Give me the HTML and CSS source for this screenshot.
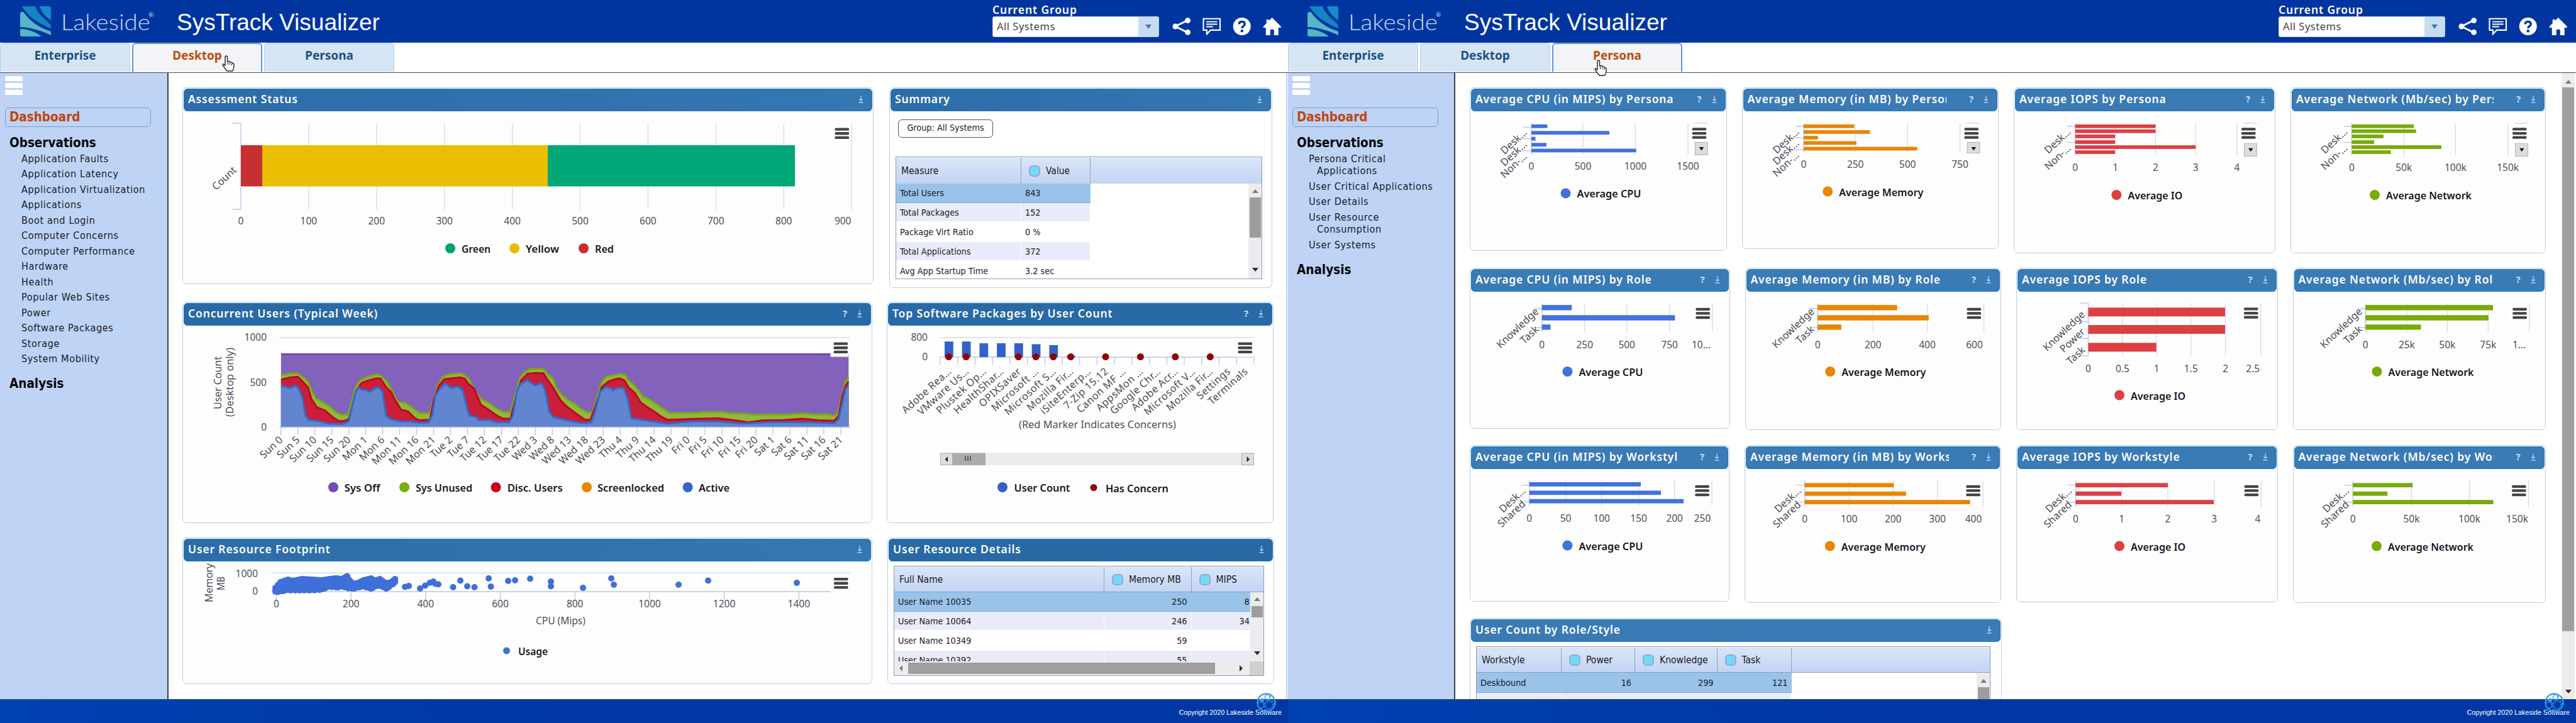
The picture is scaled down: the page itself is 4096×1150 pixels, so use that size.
FILE: index.html
```html
<!DOCTYPE html>
<html lang="en">
<head>
<meta charset="utf-8">
<title>SysTrack Visualizer</title>
<link rel="stylesheet" href="styles.css">
</head>
<body>
<svg width="0" height="0" class="defs">
  <symbol id="logo" viewBox="0 0 50 49">
    <path d="M3 0H24C27 12 40 20 49 30V35C30 28 12 16 3 0Z" fill="#1585c2"/>
    <path d="M31 0H46Q49 0 49 3V22C40 17 33 8 31 0Z" fill="#148cc9"/>
    <path d="M0 11Q2 7 6 10C16 24 30 34 49 40V46C36 40 20 34 0 33Z" fill="#54b7c8"/>
    <path d="M0 36C14 36 26 42 34 48H3Q0 48 0 45Z" fill="#54b7c8"/>
  </symbol>
  <symbol id="share" viewBox="0 0 30 28">
    <path d="M25 4L5 14L25 24" fill="none" stroke="#fff" stroke-width="3"/>
    <circle cx="25" cy="4.500" r="4.500" fill="#fff"/><circle cx="5" cy="14" r="4.500" fill="#fff"/><circle cx="25" cy="23.500" r="4.500" fill="#fff"/>
  </symbol>
  <symbol id="chat" viewBox="0 0 30 28">
    <path d="M1.500 1.500H28.500V20H13L7 26.500V20H1.500Z" fill="none" stroke="#fff" stroke-width="2.200"/>
    <path d="M6 6.500H24M6 10.500H24M6 14.500H17" stroke="#fff" stroke-width="2"/>
  </symbol>
  <symbol id="help" viewBox="0 0 28 28">
    <circle cx="14" cy="14" r="14" fill="#fff"/>
    <path d="M9.500 10.500Q9.500 6.500 14 6.500T18.500 10.500C18.500 13.500 14 13.500 14 17" fill="none" stroke="#0035a0" stroke-width="3.400"/>
    <circle cx="14" cy="21.300" r="2.200" fill="#0035a0"/>
  </symbol>
  <symbol id="home" viewBox="0 0 28 28">
    <path d="M14 0L28 14V16H24V28H17V19H11V28H4V16H0V14L5 9V3H9V5Z" fill="#fff"/>
  </symbol>
  <symbol id="save" viewBox="0 0 8 12">
    <path d="M4 0V8M1.300 5.500L4 8L6.700 5.500M.5 11H7.500" fill="none" stroke="#b4d4ef" stroke-width="1.300"/>
  </symbol>
  <symbol id="hand" viewBox="0 0 20 26">
    <path d="M5 2Q7 0 8.500 2V10L11 9.500Q13 9.500 13.500 11Q16 10.500 16.500 12.500Q19 12.500 19 15V18Q18.500 22 16.500 25H8L2 17Q0 14 2.500 14L5 16Z" fill="#fff" stroke="#222" stroke-width="1.400"/>
    <path d="M9.500 11V15M12.500 12V15M15.500 13V16" stroke="#222" stroke-width="1"/>
  </symbol>
  <symbol id="cogs" viewBox="0 0 32 32">
    <circle cx="16" cy="16" r="14.500" fill="none" stroke="#3d9be9" stroke-width="2.500"/>
    <circle cx="18" cy="7" r="4" fill="#fff" stroke="#3d9be9" stroke-width="2.500" stroke-dasharray="2.500 1.200"/>
    <circle cx="7" cy="20" r="5" fill="none" stroke="#2a86e0" stroke-width="2"/>
    <circle cx="21" cy="20" r="7" fill="none" stroke="#1f7ee0" stroke-width="4" stroke-dasharray="3 1.500"/>
    <path d="M4 12L10 8L13 13L10 16Z" fill="#3d9be9"/>
  </symbol>
</svg>

<div class="screens">
  <section class="app">
    <header class="top">
      <svg class="brand" width="220" height="60"><use href="#logo" x="0" y="10" width="50" height="49"/><text x="65" y="48" textLength="142" lengthAdjust="spacingAndGlyphs">Lakeside</text><text class="reg" x="204" y="27">®</text></svg>
      <h1>SysTrack Visualizer</h1>
      <div class="group"><label>Current Group</label><div class="select"><span>All Systems</span><i></i></div></div>
      <nav class="tools"><svg><use href="#share"/></svg><svg><use href="#chat"/></svg><svg><use href="#help"/></svg><svg><use href="#home"/></svg></nav>
    </header>
    <nav class="tabs"><a>Enterprise</a><a class="on">Desktop</a><a>Persona</a><svg class="hand hand-a"><use href="#hand"/></svg></nav>
    <div class="body">
      <aside class="side">
        <div class="burger"><i></i><i></i><i></i></div>
        <div class="current">Dashboard</div>
        <h2>Observations</h2>
        <ul>
          <li>Application Faults</li><li>Application Latency</li><li>Application Virtualization</li><li>Applications</li><li>Boot and Login</li><li>Computer Concerns</li><li>Computer Performance</li><li>Hardware</li><li>Health</li><li>Popular Web Sites</li><li>Power</li><li>Software Packages</li><li>Storage</li><li>System Mobility</li>
        </ul>
        <h2>Analysis</h2>
      </aside>
      <main class="desk">
        <article class="panel p-status"><div class="bar"><b>Assessment Status</b><svg><use href="#save"/></svg></div><svg id="status" viewBox="291 177 1097 274" width="1097" height="274"></svg></article>
        <article class="panel p-summary"><div class="bar"><b>Summary</b><svg><use href="#save"/></svg></div>
          <div class="pill">Group: All Systems</div>
          <div class="grid summary">
            <div class="thead"><span>Measure</span><span class="dot">Value</span></div>
            <div class="view">
              <div class="rows">
                <div class="row sel"><span>Total Users</span><span>843</span></div>
                <div class="row alt"><span>Total Packages</span><span>152</span></div>
                <div class="row"><span>Package Virt Ratio</span><span>0 %</span></div>
                <div class="row alt"><span>Total Applications</span><span>372</span></div>
                <div class="row"><span>Avg App Startup Time</span><span>3.2 sec</span></div>
              </div>
              <div class="vscroll"><i class="up"></i><b></b><i class="down"></i></div>
            </div>
          </div>
        </article>
        <article class="panel p-users"><div class="bar deep"><b>Concurrent Users (Typical Week)</b><em>?</em><svg><use href="#save"/></svg></div><svg id="users" viewBox="291 518 1095 313" width="1095" height="313"></svg></article>
        <article class="panel p-soft"><div class="bar deep"><b>Top Software Packages by User Count</b><em>?</em><svg><use href="#save"/></svg></div><svg id="soft" viewBox="1411 518 613 313" width="613" height="313"></svg></article>
        <article class="panel p-foot"><div class="bar"><b>User Resource Footprint</b><svg><use href="#save"/></svg></div><svg id="foot" viewBox="291 893 1095 194" width="1095" height="194"></svg></article>
        <article class="panel p-details"><div class="bar deep"><b>User Resource Details</b><svg><use href="#save"/></svg></div>
          <div class="grid details">
            <div class="thead"><span>Full Name</span><span class="dot">Memory MB</span><span class="dot">MIPS</span></div>
            <div class="view">
              <div class="rows">
                <div class="row sel"><span>User Name 10035</span><span>250</span><span>8</span></div>
                <div class="row alt"><span>User Name 10064</span><span>246</span><span>34</span></div>
                <div class="row"><span>User Name 10349</span><span>59</span><span></span></div>
                <div class="row alt"><span>User Name 10392</span><span>55</span><span></span></div>
              </div>
              <div class="vscroll"><i class="up"></i><b></b><i class="down"></i></div>
            </div>
            <div class="hscroll"><i class="left"></i><b></b><i class="right"></i><u></u></div>
          </div>
        </article>
      </main>
    </div>
    <footer><span>Copyright 2020 Lakeside Software</span><svg class="cogs"><use href="#cogs"/></svg></footer>
  </section>

  <section class="app">
    <header class="top second">
      <svg class="brand" width="220" height="60"><use href="#logo" x="0" y="10" width="50" height="49"/><text x="65" y="48" textLength="142" lengthAdjust="spacingAndGlyphs">Lakeside</text><text class="reg" x="204" y="27">®</text></svg>
      <h1>SysTrack Visualizer</h1>
      <div class="group"><label>Current Group</label><div class="select"><span>All Systems</span><i></i></div></div>
      <nav class="tools"><svg><use href="#share"/></svg><svg><use href="#chat"/></svg><svg><use href="#help"/></svg><svg><use href="#home"/></svg></nav>
    </header>
    <nav class="tabs second"><a>Enterprise</a><a>Desktop</a><a class="on">Persona</a><svg class="hand hand-b"><use href="#hand"/></svg></nav>
    <div class="body">
      <aside class="side narrow">
        <div class="burger"><i></i><i></i><i></i></div>
        <div class="current">Dashboard</div>
        <h2>Observations</h2>
        <ul>
          <li>Persona Critical<br>Applications</li><li>User Critical Applications</li><li>User Details</li><li>User Resource<br>Consumption</li><li>User Systems</li>
        </ul>
        <h2>Analysis</h2>
      </aside>
      <main class="persona">
        <div class="prow r1" id="row1"></div>
        <div class="prow r2" id="row2"></div>
        <div class="prow r3" id="row3"></div>
        <article class="panel p-roles"><div class="bar soft"><b>User Count by Role/Style</b><svg><use href="#save"/></svg></div>
          <div class="grid roles">
            <div class="thead"><span>Workstyle</span><span class="dot">Power</span><span class="dot">Knowledge</span><span class="dot">Task</span></div>
            <div class="view">
              <div class="rows">
                <div class="row sel"><span>Deskbound</span><span>16</span><span>299</span><span>121</span></div>
                <div class="row alt"><span>Non-Deskbound</span><span></span><span></span><span></span></div>
              </div>
              <div class="vscroll"><i class="up"></i><b></b></div>
            </div>
          </div>
        </article>
      </main>
      <div class="pagescroll"><i class="up"></i><b></b><i class="down"></i></div>
    </div>
    <footer><span>Copyright 2020 Lakeside Software</span><svg class="cogs"><use href="#cogs"/></svg></footer>
  </section>
</div>
<script src="app.js"></script>
</body>
</html>
```
FILE: styles.css
```css
* { box-sizing: border-box; }
body { margin: 0; background: #fff; color: #1a1a22; font-family: "DejaVu Sans Condensed", "DejaVu Sans", sans-serif; width: 4096px; height: 1150px; overflow: hidden; }
h1, h2, ul { margin: 0; padding: 0; font-weight: normal; list-style: none; }
i, em { font-style: normal; }
svg { display: block; }
.defs { position: absolute; }
.screens { display: flex; }
.app { width: 2048px; height: 1150px; display: flex; flex-direction: column; overflow: hidden; position: relative; }

.top { height: 68px; background: #0035a0; display: flex; padding-left: 32px; border-bottom: 1px solid #2a4f9f; color: #fff; }
.top.second { padding-left: 31px; }
.brand { flex: none; margin-right: 29px; }
.brand text { font: 300 36px Lato, sans-serif; fill: #c6daf2; }
.brand .reg { font: 10px Lato, sans-serif; }
.top h1 { font: 37px/1 "Liberation Sans", sans-serif; width: 1297px; padding-top: 17px; flex: none; }
.second h1 { width: 1295px; }
.group { width: 265px; padding-top: 5px; font-family: "Noto Sans", sans-serif; flex: none; }
.group label { display: block; font-weight: 600; font-size: 17.500px; letter-spacing: .9px; line-height: 21px; height: 21px; white-space: nowrap; }
.select { height: 33px; background: #fff; border: 1px solid #b9cfe8; border-radius: 3px; display: flex; color: #444; font-size: 16.500px; line-height: 30px; padding-left: 6px; letter-spacing: .5px; }
.select span { flex: 1; }
.select i { width: 32px; background: #c8dcf0; display: grid; place-items: center; }
.select i::before { content: ""; border: 5px solid transparent; border-top: 7px solid #3d7fb8; border-bottom: 0; }
.tools { display: flex; padding-top: 28px; margin-left: 21px; gap: 18.500px; }
.tools svg { width: 29.500px; height: 28px; flex: none; }

.tabs { height: 48px; display: flex; gap: 3px; padding: 0; border-bottom: 1.500px solid #4a4a50; position: relative; flex: none; }
.tabs a { width: 207px; height: 46px; background: #d6e5f4; border: 1px solid #b4cde6; border-bottom: 0; border-radius: 6px 6px 0 0; text-align: center; font: 700 19px/38px "Noto Sans", sans-serif; color: #1d5183; }
.tabs a.on { background: #f3f4f8; border: 2px solid #5e97cd; border-bottom: 0; color: #b94e08; line-height: 36px; }
.hand { position: absolute; width: 20px; height: 26px; }
.hand-a { left: 353px; top: 20px; }
.hand-b { left: 487px; top: 27px; }

.body { height: 996px; display: flex; overflow: hidden; flex: none; }
.side { width: 268px; flex: none; background: #bfd3f5; border-right: 2px solid #3a3f4c; padding: 5px 0 0 8px; color: #171c28; }
.side.narrow { width: 266px; padding-left: 7px; }
.burger { display: grid; gap: 3px; width: 28px; }
.burger i { height: 8px; background: #fff; border-radius: 2px; }
.current { margin-top: 20px; width: 232px; height: 31px; border: 1.500px solid #6c9fdc; border-radius: 6px; padding-left: 6px; color: #c0460c; font: bold 20.500px/28px "DejaVu Sans Condensed", sans-serif; }
.side h2 { font: bold 20.500px/24px "DejaVu Sans Condensed", sans-serif; padding-left: 7px; color: #05060c; }
.side .current + h2 { margin-top: 13px; height: 28px; }
.side ul { padding-left: 26px; margin-bottom: 15px; }
.side li { font-size: 16.200px; letter-spacing: .58px; line-height: 19.400px; padding: 2.700px 0 2.400px 13px; text-indent: -13px; white-space: nowrap; }
.side li:first-child { padding-top: 0; }

.desk { display: grid; grid-template-columns: 1120px 616px; grid-template-rows: 341px 375px 233px; padding: 23px 0 0 22px; width: 1779px; border-right: 2px solid #b7d2f4; align-items: start; }
.panel { border: 1px solid #b9cddf; border-radius: 7px; background: #fff; overflow: hidden; display: flex; flex-direction: column; flex: none; }
.p-status { width: 1099px; height: 313px; }
.p-summary { width: 609px; height: 319px; margin-left: 4px; }
.p-users { width: 1097px; height: 352px; }
.p-soft { width: 615px; height: 352px; }
.p-foot { width: 1097px; height: 233px; }
.p-details { width: 615px; height: 233px; margin-left: 1px; }
.panel > svg { background: #fdfdfe; flex: none; }
.bar { height: 36px; flex: none; margin: 1px 1px 0; border-radius: 6px; border: 1px solid #1f78c2; background: linear-gradient(90deg, #2c6da9, #3577b2); display: flex; align-items: flex-start; padding: 0 13px 0 6px; color: #fff; }
.bar.deep { background: #2869a6; }
.bar.soft { background: #3a7ab5; }
.bar b { flex: 1; overflow: hidden; white-space: nowrap; font: 600 17.500px/31px "Noto Sans", sans-serif; letter-spacing: .85px; }
.bar em { font: 700 15px/31px "Noto Sans", sans-serif; color: #c6def3; width: 23px; }
.prow .bar em { width: 59px; padding-left: 36px; }
.bar svg { width: 8px; height: 12px; margin-top: 10px; flex: none; }

.pill { align-self: flex-start; margin: 13px 0 0 13px; width: 151px; height: 29px; border: 1.500px solid #555; border-radius: 6px; text-align: center; font-size: 14.300px; line-height: 25px; }
.grid { border: 1px solid #8a9bb2; display: flex; flex-direction: column; background: #fff; }
.thead { display: flex; background: linear-gradient(#dae5f8, #c3d4f3); font-size: 15.500px; border-top: 1px solid #f3f7ff; flex: none; }
.thead span { border-right: 1px solid #93a3bb; display: flex; align-items: center; padding-left: 8px; }
.thead .dot::before { content: ""; width: 14px; height: 14px; border-radius: 6px; background: #6fdcf2; border: 2px solid #9aa2e2; margin: 0 9px 0 4px; }
.view { display: flex; flex: 1; overflow: hidden; min-height: 0; }
.rows { flex: 1; overflow: hidden; font-size: 14.300px; }
.row { display: flex; height: 30.900px; line-height: 30px; white-space: nowrap; }
.row span { border-right: 1px solid transparent; padding-left: 6px; flex: none; }
.row.alt span { background: #e8ebf9; border-right-color: #fff; background-clip: padding-box; margin-bottom: 2px; }
.row.sel span { background: #9ac3ea; border-right-color: #9ac3ea; border-bottom: 1px solid #7aa9d6; }
.summary { margin: 30px 0 0 9px; width: 583px; height: 195px; }
.summary .thead { height: 42px; }
.summary .row span:first-child, .summary .thead span:first-child { width: 199px; }
.summary .row span:last-child, .summary .thead span:last-child { width: 110px; }
.vscroll { width: 21px; background: #ececee; display: flex; flex-direction: column; align-items: center; flex: none; }
.vscroll b { width: 18px; background: #9d9d9d; }
.up { border: 5.500px solid transparent; border-bottom: 6px solid #7d7d7d; border-top: 0; }
.down { border: 5.500px solid transparent; border-top: 6px solid #2c2c2c; border-bottom: 0; }
.summary .up { margin: 9px 0 7px; }
.summary b { height: 64px; }
.summary .down { margin-top: 48px; }

.details { margin: 7px 0 0 9px; width: 589px; height: 175px; }
.details .thead { height: 41px; border-bottom: 1px solid #8aa0bf; }
.details .row span:nth-child(1), .details .thead span:nth-child(1) { width: 334px; }
.details .row span:nth-child(2), .details .thead span:nth-child(2) { width: 138.500px; }
.details .row span:nth-child(3) { width: 100px; padding-left: 76px; text-align: left; }
.details .row.sel span:nth-child(3) { padding-left: 84px; }
.details .thead span:nth-child(3) { border-right: 0; }
.details .row span:nth-child(2) { text-align: right; padding-right: 6px; }
.details .up { margin: 8px 0 8px; }
.details .vscroll b { height: 18px; }
.details .vscroll .down { margin-top: 54px; }
.hscroll { height: 22px; background: #ececee; display: flex; align-items: center; flex: none; }
.hscroll b { width: 488px; height: 18px; background: #9f9f9f; flex: none; }
.left { border: 5.500px solid transparent; border-right: 5px solid #7d7d7d; border-left: 0; margin: 0 9px 0 8px; }
.right { border: 5.500px solid transparent; border-left: 5px solid #2c2c2c; border-right: 0; margin-left: 39px; }
.hscroll u { width: 22px; height: 22px; background: #cfcfcf; margin-left: auto; }

.persona { width: 1759px; flex: none; padding: 23px 0 0 23px; height: 996px; overflow: hidden; }
.prow { display: flex; gap: 24px; align-items: flex-start; }
.r1 { height: 287px; } .r2 { height: 282px; } .r3 { height: 275px; }
.p-roles { width: 846px; height: 330px; }
.roles { margin: 7px 0 0 9px; width: 818px; height: 260px; }
.roles .thead { height: 41px; border-bottom: 1px solid #8aa0bf; }
.roles .thead span:nth-child(1), .roles .row span:nth-child(1) { width: 135px; }
.roles .thead span:nth-child(2), .roles .row span:nth-child(2) { width: 117px; }
.roles .thead span:nth-child(3), .roles .row span:nth-child(3) { width: 130.500px; }
.roles .thead span:nth-child(4), .roles .row span:nth-child(4) { width: 118px; }
.roles .row span:nth-child(n+2) { text-align: right; padding-right: 5px; }
.roles .row { height: 32px; line-height: 32px; }
.roles .up { margin: 10px 0 7px; }
.roles .vscroll b { height: 200px; }
.pagescroll { width: 21px; background: #ececee; display: flex; flex-direction: column; align-items: center; height: 996px; }
.pagescroll .up { margin: 11px 0 6px; flex: none; }
.pagescroll b { width: 19px; height: 865px; background: #9f9fa1; flex: none; }
.pagescroll .down { margin-top: 93px; }

footer { height: 38px; background: linear-gradient(90deg, #0042b0, #0037a4 45%); border-top: 1px solid #27477e; position: relative; color: #fff; text-align: right; padding: 14px 10px 0 0; font: 10.700px/12px "Liberation Sans", sans-serif; flex: none; }
.cogs { position: absolute; width: 31px; height: 33px; left: 1998px; top: -12px; opacity: .95; }

svg text { font-family: "Noto Sans", sans-serif; }
.tick { font-size: 15.500px; fill: #4d4d55; }
.slant { font-size: 16.200px; fill: #4d4d55; }
.key { font-size: 15.500px; font-weight: 600; fill: #15151c; }
```
FILE: app.js
```js
const GRID = '#d9dae2', AXIS = '#bcc4e4';
const text = (x, y, s, cls = 'tick', extra = '') => `<text x="${x}" y="${y}" class="${cls}" ${extra}>${s}</text>`;
const mid = (x, y, s) => text(x, y, s, 'tick', 'text-anchor="middle"');
const end = (x, y, s) => text(x, y, s, 'tick', 'text-anchor="end"');
const rect = (x, y, w, h, f) => `<rect x="${x}" y="${y}" width="${w}" height="${h}" fill="${f}"/>`;
const line = (x1, y1, x2, y2, c = GRID) => `<path d="M${x1} ${y1}L${x2} ${y2}" stroke="${c}" stroke-width="1.3"/>`;
const slant = (x, y, s, a = -43) => text(x, y, s, 'slant', `text-anchor="end" transform="rotate(${a} ${x} ${y})"`);
const menu = (x, y) => rect(x - 5, y - 6, 29, 29, '#fff') +
  [0, 6.6, 13.2].map(d => `<rect x="${x}" y="${y + d}" width="22.500" height="4.300" rx="1.500" fill="#444"/>`).join('');
const key = (x, y, color, s, tx, len, r = 8) => `<circle cx="${x}" cy="${y}" r="${r}" fill="${color}"/>` +
  text(tx, y + 7, s, 'key', `textLength="${len}" lengthAdjust="spacingAndGlyphs"`);
const draw = (id, s) => { document.getElementById(id).innerHTML = s; };

/* Assessment status */
{
  let s = '';
  for (let i = 0; i < 10; i++) {
    const x = 383 + i * 107.9;
    if (i) s += line(x, 196, x, 333);
    s += i < 9 ? mid(x, 357, i * 100) : end(1353.5, 357, 900);
  }
  s += line(383, 196, 383, 333, AXIS) + line(370, 196, 383, 196, AXIS) + line(370, 333, 383, 333, AXIS);
  s += rect(383, 231, 34, 65.5, '#c63032') + rect(417, 231, 454, 65.5, '#ebbd00') + rect(871, 231, 393, 65.5, '#00a878');
  s += slant(377, 272, 'Count') + menu(1327.5, 203.5);
  s += key(716, 395, '#00a070', 'Green', 734, 46) + key(818, 395, '#e9bb00', 'Yellow', 836, 53) + key(928, 395, '#c63032', 'Red', 946, 30);
  draw('status', s);
}

/* Concurrent users; boundaries are listed on a 1246 by 437 plane */
{
  const green = '241,500 260,490 278,488 290,510 300,535 308,590 318,640 338,668 350,690 362,720 372,735 388,735 396,660 405,570 415,530 430,510 440,503 452,494 462,505 475,540 485,590 495,650 505,662 515,665 530,695 545,725 568,725 575,650 585,560 597,508 610,494 635,486 645,500 655,525 663,580 680,640 700,670 715,700 730,720 745,718 755,620 765,520 775,480 788,462 817,462 827,495 837,515 845,570 855,610 870,645 885,670 900,700 912,720 925,720 935,630 945,540 955,508 970,500 985,492 997,498 1003,530 1015,555 1025,590 1035,625 1050,645 1070,680 1085,710 1095,724 1155,724 1165,718 1215,720 1225,726 1255,728 1280,736 1320,733 1340,735 1385,727 1410,733 1440,732 1455,742 1463,725 1472,620 1478,545 1487,510';
  const red = '241,525 260,512 278,508 290,540 300,570 308,640 320,690 338,710 355,750 368,772 380,772 390,760 398,680 407,590 418,545 430,532 452,516 460,520 472,570 483,600 492,650 505,705 520,715 535,755 545,768 568,765 577,640 588,560 600,522 635,512 645,520 652,550 665,580 680,675 700,710 715,740 728,758 745,757 756,640 768,530 782,490 800,485 817,487 827,530 840,580 855,650 870,690 890,730 908,765 920,765 932,680 945,570 960,535 975,522 985,517 995,530 1005,575 1018,605 1030,660 1045,690 1060,715 1075,745 1090,765 1140,760 1200,755 1250,772 1265,780 1300,768 1340,768 1385,758 1420,768 1455,770 1465,740 1473,620 1480,560 1487,535';
  const blue = '241,560 252,568 262,575 272,560 280,578 288,630 295,740 302,765 320,770 345,788 375,790 390,775 397,690 405,600 412,572 420,588 427,585 436,598 446,578 456,570 464,600 472,740 482,762 505,775 525,775 545,783 565,780 573,740 580,620 590,580 602,548 615,575 630,565 640,590 650,700 655,740 668,745 675,767 700,765 715,780 742,780 750,740 760,580 768,550 782,528 798,560 812,548 820,580 830,720 840,750 865,765 890,780 908,785 922,780 932,700 942,595 955,568 965,578 970,590 978,575 993,575 1002,640 1010,755 1040,768 1088,788 1140,775 1200,775 1255,787 1320,778 1400,780 1455,785 1465,760 1475,640 1480,575 1487,565';
  const area = (pts, fill, stroke) => `<polygon points="241,807 ${pts} 1487,807" fill="${fill}"/><polyline points="${pts}" fill="none" stroke="${stroke}" stroke-width="3" vector-effect="non-scaling-stroke"/>`;
  let s = line(444, 537, 1352, 537) + line(444, 608, 1352, 608);
  s += `<svg x="446.600" y="562" width="903" height="117" viewBox="241 368 1246 439" preserveAspectRatio="none">` +
    area('241,371 1487,371', '#8262bb', '#6a44ae') + area(green, '#8fb93c', '#7aac12') + area(red, '#c91f3b', '#c4061c') + area(blue, '#6186cf', '#3369ce') + '</svg>';
  s += line(444, 679.5, 1352, 679.5, AXIS) + end(424, 542, '1000') + end(424, 614, '500') + end(424, 685, '0');
  const names = ['Sun', 'Mon', 'Tue', 'Wed', 'Thu', 'Fri', 'Sat'];
  for (let i = 0; i < 34; i++) {
    const x = 446.6 + i * 26.98, h = i * 5;
    s += line(x, 680, x, 692, AXIS) + slant(x + 4, 701, names[Math.floor(h / 24)] + ' ' + h % 24);
  }
  s += text(352, 609, 'User Count', 'slant', 'text-anchor="middle" textLength="84" transform="rotate(-90 352 609)"');
  s += text(371, 608, '(Desktop only)', 'slant', 'text-anchor="middle" textLength="110" transform="rotate(-90 371 608)"');
  s += menu(1325.5, 544.5);
  s += key(530, 775, '#7348b8', 'Sys Off', 547.5, 57) + key(643, 775, '#7aac0c', 'Sys Unused', 661, 90) + key(788.5, 775, '#c8001e', 'Disc. Users', 806.7, 88) + key(933, 775, '#e68600', 'Screenlocked', 950, 106) + key(1093.6, 775, '#2f66cc', 'Active', 1111, 49);
  draw('users', s);
}

/* Software packages */
{
  const names = ['Adobe Rea…', 'VMware Us…', 'Plustek Op…', 'HealthShar…', 'OPIXSaver', 'Microsoft …', 'Microsoft S…', 'Mozilla Fir…', 'iSiteEnterp…', '7-Zip 15.12', 'Canon MF …', 'AppsMon …', 'Google Chr…', 'Adobe Acr…', 'Microsoft V…', 'Mozilla Fir…', 'Settings', 'Terminals'];
  const tops = [543.2, 543.2, 546, 546, 546, 547.5, 549, 566];
  const concerns = [0, 1, 4, 5, 6, 7, 9, 11, 13, 15];
  let s = line(1496, 537, 1994, 537) + end(1475, 542, '800') + end(1475, 573, '0') + line(1495, 568, 1994, 568, AXIS);
  for (let i = 0; i <= 18; i++) s += line(1495 + i * 27.72, 568, 1495 + i * 27.72, 580.5, AXIS);
  tops.forEach((t, i) => { s += rect(1502 + i * 27.72, t, 13.8, 568 - t, '#3162c7'); });
  names.forEach((n, i) => { s += text(1514 + i * 27.72, 592, n, 'slant', `letter-spacing=".5" text-anchor="end" transform="rotate(-42 ${1514 + i * 27.72} 592)"`); });
  concerns.forEach(i => { s += `<circle cx="${1508.5 + i * 27.72}" cy="567.500" r="5.500" fill="#950005"/>`; });
  s += text(1620, 681, '(Red Marker Indicates Concerns)', 'tick', 'textLength="250" lengthAdjust="spacingAndGlyphs"');
  s += rect(1495, 720.5, 499, 19.5, '#ebebeb') + rect(1513, 720.5, 54, 19.5, '#ababab');
  s += [1495.5, 1974.5].map(x => `<rect x="${x}" y="721" width="19" height="18.500" fill="#dedede" stroke="#aaa"/>`).join('');
  s += '<path d="M1507 726V735L1502.500 730.500ZM1982.500 726V735L1987 730.500Z" fill="#222"/><path d="M1535 725.500V733M1539 725.500V733M1543 725.500V733" stroke="#333" stroke-width="1.300"/>';
  s += menu(1968.5, 544.5) + key(1594, 775, '#3162c7', 'User Count', 1612.5, 89) + key(1739, 775.5, '#950005', 'Has Concern', 1758, 100, 5.5);
  draw('soft', s);
}

/* Memory against CPU */
{
  let s = line(431, 911.5, 1352, 911.5) + line(431, 941, 1321, 941, AXIS) + end(410, 918, '1000') + end(410, 946, '0');
  for (let i = 0; i < 8; i++) s += line(439.4 + i * 118.7, 941, 439.4 + i * 118.7, 954, AXIS) + mid(439.4 + i * 118.7, 966, i * 200);
  const dots = [[644, 933.5], [650, 932], [668, 936], [676, 931.5], [683.5, 927], [689, 925], [692, 928.5], [697, 929.5], [720.5, 934], [732, 923.5], [743, 932.5], [754.5, 934], [777, 920], [780.5, 933], [808, 924], [819, 923], [843, 920.5], [876, 925], [876, 932.5], [927, 935], [972, 920], [976, 930], [1079, 930], [1126, 923.5], [1267, 927]];
  const edge = [[438, 935, 941], [446, 926, 940], [458, 922, 938], [466, 924, 938], [480, 921, 938], [496, 922, 938], [512, 923, 937], [524, 921, 932], [534, 920, 934], [544, 921, 932], [551, 917, 934], [560, 928, 936], [568, 928, 934], [578, 923, 932], [590, 920, 936], [596, 924, 932], [604, 921, 930], [614, 928, 936], [622, 926, 930], [628, 921, 926], [632, 924, 925]];
  for (let i = 0; i < edge.length - 1; i++) {
    const [x, a, b] = edge[i], [x2, a2, b2] = edge[i + 1], n = Math.ceil((x2 - x) / 4);
    for (let j = 0; j < n; j++) {
      const t = j / n, lo = a + (a2 - a) * t, hi = b + (b2 - b) * t;
      for (let y = lo; y <= hi; y += 4) dots.push([x + (x2 - x) * t, y]);
      dots.push([x + (x2 - x) * t, hi + (j % 2)]);
    }
  }
  dots.push([552, 916.5], [628, 922]);
  s += dots.map(d => `<circle cx="${d[0].toFixed(1)}" cy="${d[1].toFixed(1)}" r="5" fill="#3f70d8"/>`).join('');
  s += text(338, 958, 'Memory', 'slant', 'textLength="62" transform="rotate(-90 338 958)"') + text(357, 939, 'MB', 'slant', 'textLength="22" lengthAdjust="spacingAndGlyphs" transform="rotate(-90 357 939)"');
  s += mid(891.5, 993, 'CPU (Mips)') + menu(1326, 919) + key(805.5, 1035, '#3f70d8', 'Usage', 824, 47, 5.5);
  draw('foot', s);
}

/* Persona panels: every card is a small bar chart with its own scale */
const BLUE = '#4072dc', ORANGE = '#e88600', RED = '#dc4042', GREEN = '#78ab08';
const LEN = { CPU: 102, Memory: 134, IO: 87, Network: 136 };
function panel(row, left, top, p) {
  let s = '';
  const g = top + p.gridTop;
  p.ticks.forEach(([x, label, lx], i) => {
    if (i) s += line(x, g, x, p.bottom);
    s += mid(lx || x, p.labelY, label);
  });
  const ax = p.ticks[0][0];
  s += line(ax, g, ax, p.bottom, AXIS);
  p.marks.forEach(y => { s += line(ax - 13, y, ax, y, AXIS); });
  p.ends.forEach((x, i) => { s += rect(ax, p.ys[i] - p.bar / 2, x - ax, p.bar, p.color); });
  p.cats.forEach(([n, y]) => { s += slant(ax - (p.near || 6), y, n); });
  s += menu(p.menu, g + 7.3);
  if (p.drop) {
    const y = p.drop;
    s += line(p.menu + 4, 196, p.menu + 25, 196) + `<rect x="${p.menu + 4.5}" y="${y}" width="20" height="${p.bottom - y + 1}" fill="#dcdcde" stroke="#b4b4b6"/><path d="M${p.menu + 11} ${y + 7.500}h7.500l-3.750 5.500Z" fill="#111"/>`;
  }
  s += key(p.key[0], p.key[1], p.color, 'Average ' + p.name, p.key[0] + 18, LEN[p.name]);
  const h = p.h - 39;
  document.getElementById(row).insertAdjacentHTML('beforeend',
    `<article class="panel" style="width:${p.w}px;height:${p.h}px"><div class="bar soft"><b>${p.title}</b><em>?</em><svg><use href="#save"/></svg></div>` +
    `<svg viewBox="${left + 1} ${top + 38} ${p.w - 2} ${h}" width="${p.w - 2}" height="${h}">${s}</svg></article>`);
}
const D = 'Desk…', N = 'Non-…';
panel('row1', 2337, 139, { w: 408.5, h: 260, title: 'Average CPU (in MIPS) by Persona', name: 'CPU', color: BLUE, gridTop: 57, bottom: 245.4, labelY: 269.7,
  ticks: [[2435, 0], [2517, 500], [2600.4, 1000], [2684, 1500]], ends: [2460.4, 2559, 2441.5, 2459, 2601.6], ys: [200.8, 211.2, 220.7, 230.2, 239.4], bar: 5.8,
  marks: [202.4, 220.7, 239.7], cats: [[D, 212], [D, 231], [N, 250]], key: [2489.5, 307.4], menu: 2690.7, drop: 226.4 });
panel('row1', 2769.5, 139, { w: 408.5, h: 257, title: 'Average Memory (in MB) by Persona', name: 'Memory', color: ORANGE, gridTop: 57, bottom: 242.5, labelY: 266.6,
  ticks: [[2867.4, 0], [2949.7, 250], [3032.6, 500], [3116, 750]], ends: [2948, 2973, 2890.2, 2951.4, 3048], ys: [200.8, 210, 219, 227.4, 236.5], bar: 5.8,
  marks: [201, 219.4, 238], cats: [[D, 211], [D, 229], [N, 248]], key: [2905.7, 304.5], menu: 3123, drop: 226.4 });
panel('row1', 3202, 139, { w: 416, h: 264, title: 'Average IOPS by Persona', name: 'IO', color: RED, gridTop: 57, bottom: 247.6, labelY: 272,
  ticks: [[3299.8, 0], [3363.6, 1], [3427.5, 2], [3491.3, 3], [3557, 4]], ends: [3427.5, 3427.5, 3363, 3363, 3491.3, 3363], ys: [200.8, 208.7, 216.9, 226, 234, 242], bar: 5.8,
  marks: [201, 226.7], cats: [[D, 211], [N, 237]], key: [3365.4, 310], menu: 3564, drop: 228.3 });
panel('row1', 3642, 139, { w: 406, h: 264, title: 'Average Network (Mb/sec) by Persona', name: 'Network', color: GREEN, gridTop: 57, bottom: 247.6, labelY: 272,
  ticks: [[3739.5, 0], [3822.3, '50k'], [3904.4, '100k'], [3987.7, '150k']], ends: [3838.2, 3841.8, 3789.8, 3775, 3882, 3801.6], ys: [200.8, 208.7, 216.9, 226, 234, 242], bar: 5.8,
  marks: [201, 226.7], cats: [[D, 211], [N, 237]], key: [3776, 310], menu: 3995, drop: 228.3 });

const K = 'Knowledge', T = 'Task';
panel('row2', 2337, 426, { w: 413.5, h: 256, title: 'Average CPU (in MIPS) by Role', name: 'CPU', color: BLUE, gridTop: 56.4, bottom: 528, labelY: 553.6,
  ticks: [[2451.8, 0], [2519.8, 250], [2586.7, 500], [2654.7, 750], [2722.7, '10…', 2705]], ends: [2499.2, 2663.3, 2465.5], ys: [489.3, 505.5, 520.3], bar: 8.4,
  marks: [491, 521], cats: [[K, 497], [T, 525]], near: 4, key: [2492.4, 591], menu: 2696.4 });
panel('row2', 2774.5, 426, { w: 407.5, h: 258, title: 'Average Memory (in MB) by Role', name: 'Memory', color: ORANGE, gridTop: 56.4, bottom: 528, labelY: 553.6,
  ticks: [[2889.6, 0], [2977.7, 200], [3064, 400], [3154, 600, 3139]], ends: [3016, 3066.3, 2927.4], ys: [489.3, 505.5, 520.3], bar: 8.4,
  marks: [491, 521], cats: [[K, 497], [T, 525]], near: 4, key: [2909.7, 591], menu: 3127 });
panel('row2', 3206, 426, { w: 415.5, h: 258, title: 'Average IOPS by Role', name: 'IO', color: RED, gridTop: 56, bottom: 566, labelY: 591.5,
  ticks: [[3320.5, 0], [3374.9, 0.5], [3429.2, 1], [3483.6, 1.5], [3538.6, 2], [3594.7, 2.5, 3582.3]], ends: [3538, 3538, 3428.7], ys: [496.3, 524, 552.3], bar: 14,
  marks: [482, 511.5, 538.4, 566], cats: [[K, 501.5], ['Power', 529], [T, 558]], near: 4, key: [3370, 628.5], menu: 3568 });
panel('row2', 3645.5, 426, { w: 402, h: 258, title: 'Average Network (Mb/sec) by Role', name: 'Network', color: GREEN, gridTop: 56.4, bottom: 528, labelY: 553.6,
  ticks: [[3760.8, 0], [3826.4, '25k'], [3890.8, '50k'], [3955.8, '75k'], [4021.4, '1…', 4005]], ends: [3963.5, 3956.4, 3848.9], ys: [489.3, 505.5, 520.3], bar: 8.4,
  marks: [491, 521], cats: [[K, 497], [T, 525]], near: 4, key: [3779, 591], menu: 3994.8 });

const S = 'Shared';
panel('row3', 2337, 708, { w: 413, h: 249, title: 'Average CPU (in MIPS) by Workstyle', name: 'CPU', color: BLUE, gridTop: 56.4, bottom: 804.6, labelY: 829.7,
  ticks: [[2431.8, 0], [2489.5, 50], [2546.7, 100], [2605.6, 150], [2662.7, 200], [2722, 250, 2707]], ends: [2609, 2641, 2677], ys: [770.4, 783.8, 797.2], bar: 6.8,
  marks: [771.7, 798], cats: [[D, 782], [S, 803]], near: 5, key: [2492.4, 867.6], menu: 2695.3 });
panel('row3', 2774, 708, { w: 408, h: 251, title: 'Average Memory (in MB) by Workstyle', name: 'Memory', color: ORANGE, gridTop: 56.4, bottom: 806, labelY: 830.7,
  ticks: [[2869.6, 0], [2940, 100], [3010.2, 200], [3080.6, 300], [3153, 400, 3138]], ends: [3011.4, 3030.8, 3132.6], ys: [771.7, 785.2, 798.6], bar: 6.8,
  marks: [771.7, 799], cats: [[D, 782], [S, 804]], near: 5, key: [2909.7, 868.6], menu: 3126.3 });
panel('row3', 3206, 708, { w: 415.5, h: 250, title: 'Average IOPS by Workstyle', name: 'IO', color: RED, gridTop: 56.4, bottom: 806, labelY: 830.7,
  ticks: [[3300.4, 0], [3373.7, 1], [3447, 2], [3520.8, 3], [3595.3, 4, 3590]], ends: [3447, 3373, 3520], ys: [771.7, 785.2, 798.6], bar: 6.8,
  marks: [771.7, 799], cats: [[D, 782], [S, 804]], near: 5, key: [3370, 868.6], menu: 3568.7 });
panel('row3', 3645.5, 708, { w: 402, h: 251, title: 'Average Network (Mb/sec) by Workstyle', name: 'Network', color: GREEN, gridTop: 56.4, bottom: 806, labelY: 830.7,
  ticks: [[3740.7, 0], [3834, '50k'], [3926, '100k'], [4020, '150k', 4002]], ends: [3835.8, 3795.7, 3964], ys: [771.7, 785.2, 798.6], bar: 6.8,
  marks: [771.7, 799], cats: [[D, 782], [S, 804]], near: 5, key: [3778.5, 868.6], menu: 3993.6 });
```
